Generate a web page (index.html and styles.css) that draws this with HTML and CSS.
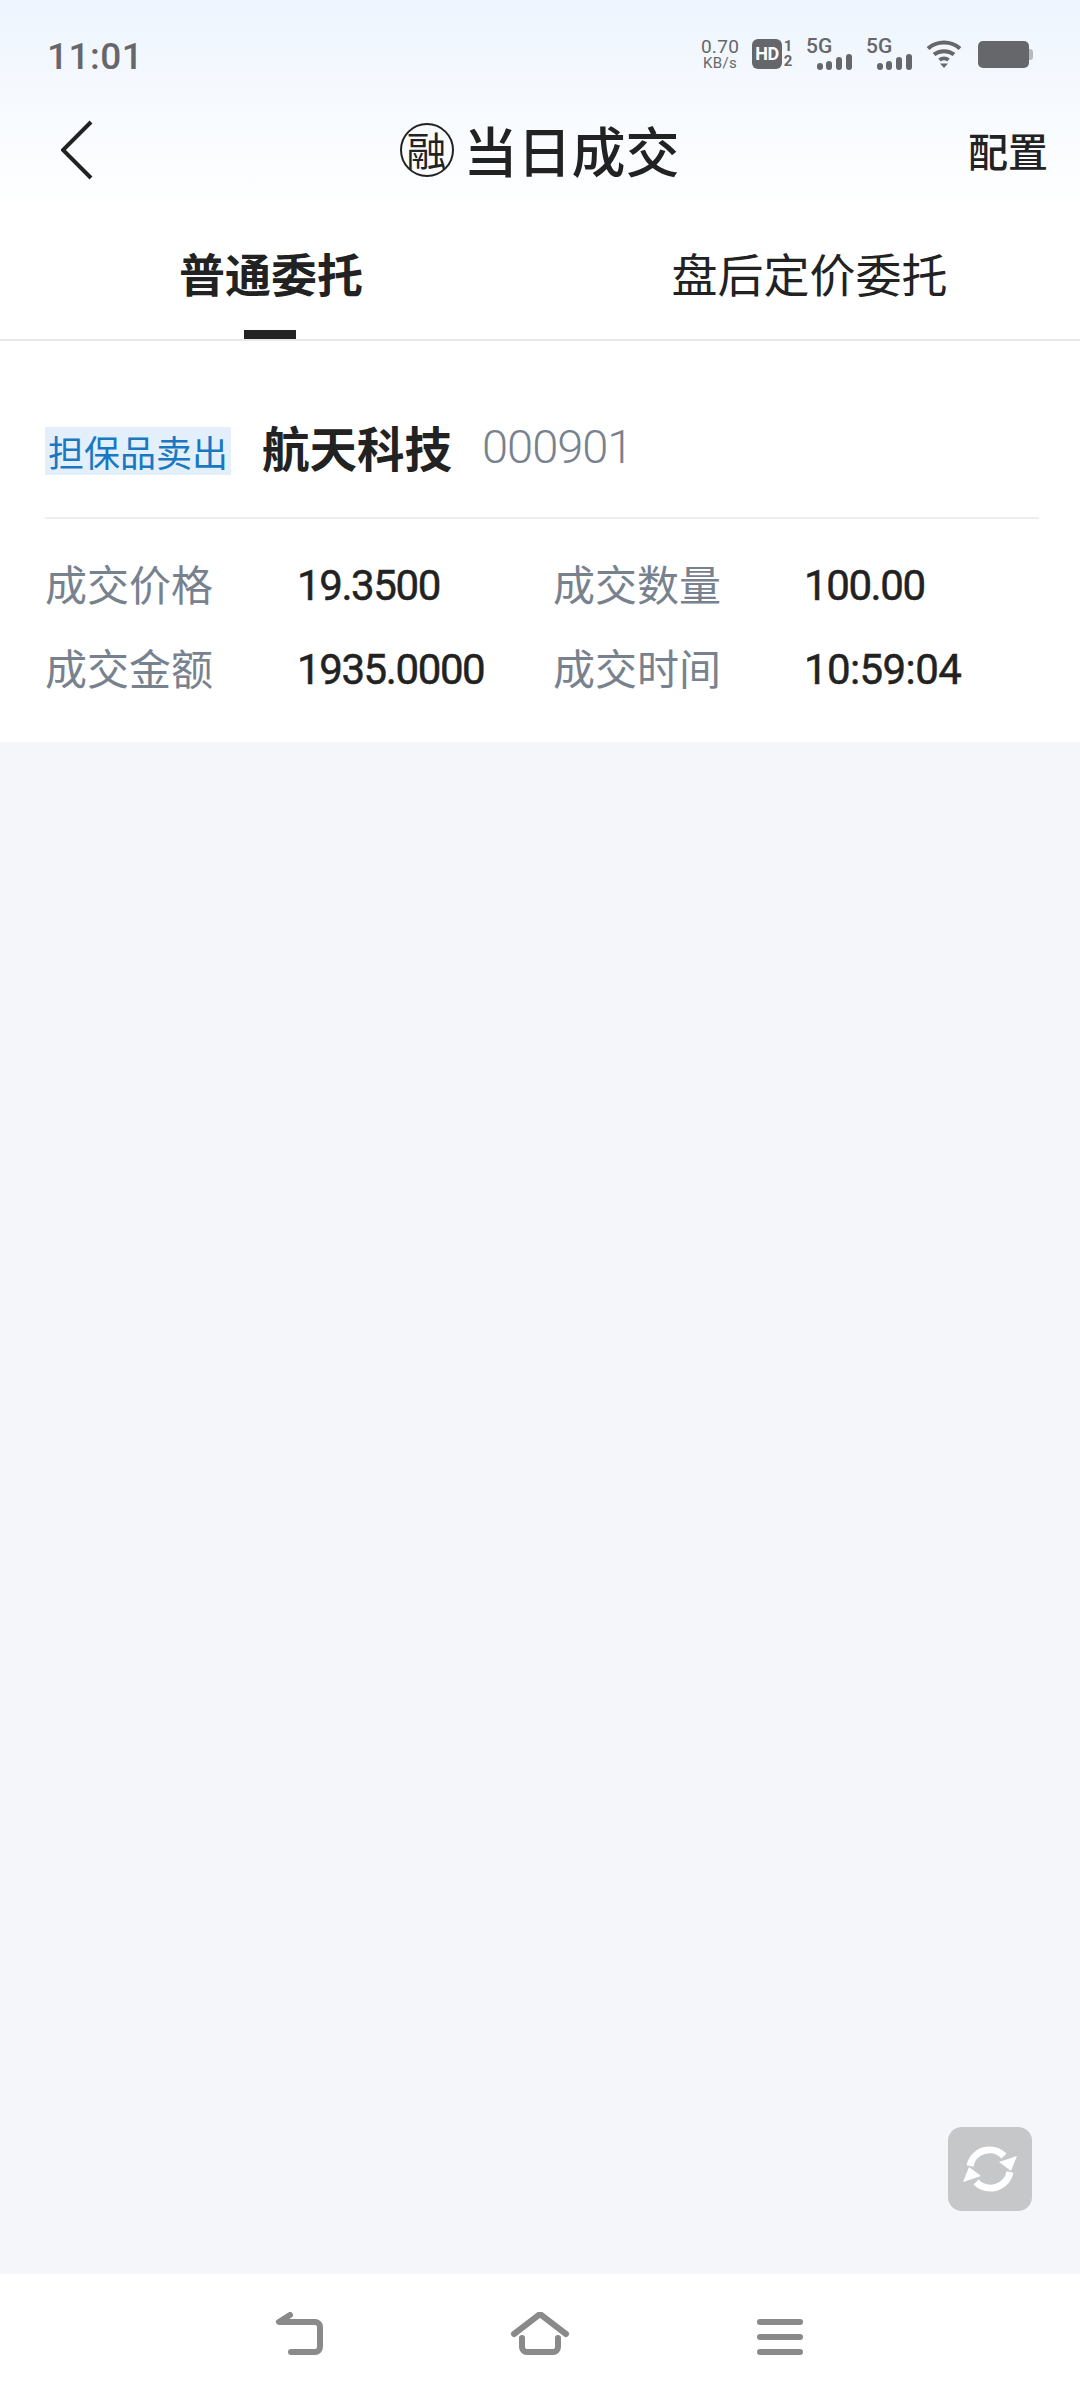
FILE: index.html
```html
<!DOCTYPE html>
<html lang="zh-CN">
<head>
  <meta charset="UTF-8">
  <title>当日成交</title>
  <link rel="stylesheet" href="styles.css">
</head>
<body>

<div class="screen">
  <!-- 顶部渐变区 -->
  <div class="top-area">
    <div class="status-bar">
      <div class="clock">11:01</div>
      <div class="status-icons">
        <div class="net-speed"><span>0.70</span><span class="unit">KB/s</span></div>
        <div class="hd-group">
          <div class="hd-box">HD</div>
          <div class="hd-num"><span>1</span><span>2</span></div>
        </div>
        <div class="signal">
          <span class="signal-text">5G</span>
          <svg class="signal-bars" width="35" height="16" viewBox="0 0 35 16"><rect x="0" y="9" width="6" height="7" rx="3"/><rect x="9" y="7" width="6" height="9" rx="3"/><rect x="19" y="3" width="6" height="13" rx="3"/><rect x="29" y="0" width="6" height="16" rx="3"/></svg>
        </div>
        <div class="signal">
          <span class="signal-text">5G</span>
          <svg class="signal-bars" width="35" height="16" viewBox="0 0 35 16"><rect x="0" y="9" width="6" height="7" rx="3"/><rect x="9" y="7" width="6" height="9" rx="3"/><rect x="19" y="3" width="6" height="13" rx="3"/><rect x="29" y="0" width="6" height="16" rx="3"/></svg>
        </div>
        <svg class="wifi" width="36" height="28" viewBox="0 0 36 28">
          <path d="M2 8.5C11 0.5 25 0.5 34 8.5" />
          <path d="M8 14.5C13.500 10 22.500 10 28 14.5" />
          <path d="M13.500 20C16 18 20 18 22.500 20" />
          <polygon class="wifi-dot" points="14,23.500 22,23.500 18,28" />
        </svg>
        <div class="battery"><div class="battery-body"></div><div class="battery-tip"></div></div>
      </div>
    </div>

    <!-- 标题栏 -->
    <div class="title-bar">
      <svg class="back-btn" width="32" height="60" viewBox="0 0 32 60"><path d="M30 2L2 30L30 58" /></svg>
      <div class="title">
        <span class="title-logo">融</span>
        <span>当日成交</span>
      </div>
      <div class="config">配置</div>
    </div>

    <!-- 标签页 -->
    <div class="tabs">
      <div class="tab tab-active">普通委托</div>
      <div class="tab">盘后定价委托</div>
    </div>
  </div>

  <div class="content">
    <div class="deal-card">
      <div class="deal-head">
        <span class="deal-tag">担保品卖出</span>
        <span class="deal-name">航天科技</span>
        <span class="deal-code">000901</span>
      </div>
      <div class="deal-grid">
        <div class="deal-label">成交价格</div>
        <div class="deal-value">19.3500</div>
        <div class="deal-label">成交数量</div>
        <div class="deal-value">100.00</div>
        <div class="deal-label">成交金额</div>
        <div class="deal-value">1935.0000</div>
        <div class="deal-label">成交时间</div>
        <div class="deal-value deal-time">10:59:04</div>
      </div>
    </div>

    <!-- 刷新按钮 -->
    <div class="refresh-btn">
      <svg width="60" height="60" viewBox="-30 -30 60 60">
        <g id="half">
          <path class="refresh-arc" d="M-20 -3A20 20 0 0 1 14 -13" />
          <polygon class="refresh-head" points="9,-7 27,-13 21,2" />
        </g>
        <use href="#half" transform="rotate(180)" />
      </svg>
    </div>
  </div>

  <!-- 底部导航 -->
  <div class="nav-bar">
    <svg class="nav-icon" width="50" height="46" viewBox="0 0 50 46"><path d="M15 3L4 10H40a5 5 0 0 1 5 5V35a5 5 0 0 1-5 5H16" /></svg>
    <svg class="nav-icon" width="60" height="46" viewBox="0 0 60 46"><path d="M4 22L30 2L56 22" /><path d="M12 26V35a5 5 0 0 0 5 5H43a5 5 0 0 0 5-5V26" /></svg>
    <svg class="nav-icon" width="50" height="46" viewBox="0 0 50 46"><path d="M6 10H46M6 25H46M6 40H46" /></svg>
  </div>
</div>

</body>
</html>
```

FILE: styles.css
```css
* {
  box-sizing: border-box;
}

body {
  margin: 0;
  font-family: "Noto Sans CJK SC", Roboto, sans-serif;
  color: #222;
}

.screen {
  width: 1080px;
  height: 2400px;
  display: flex;
  flex-direction: column;
  background-color: #f4f6fa;
}

/* 顶部 */
.top-area {
  background: linear-gradient(180deg, #eef5fe 0, #ffffff 210px);
  border-bottom: 2px solid #e8e8e8;
}

.status-bar {
  height: 96px;
  padding: 38px 47px 0 47px;
  display: flex;
  justify-content: space-between;
  align-items: flex-start;
  color: #66676a;
  font-family: Roboto, sans-serif;
}

.clock {
  font-size: 37px;
  font-weight: 500;
  line-height: 38px;
  letter-spacing: 0.5px;
}

.status-icons {
  display: flex;
  align-items: flex-start;
}

.net-speed {
  width: 38px;
  margin-top: 1px;
  margin-right: 13px;
  display: flex;
  flex-direction: column;
  align-items: center;
  font-size: 19px;
  font-weight: 400;
  line-height: 16px;
  letter-spacing: 0.3px;
}

.net-speed .unit {
  font-size: 15px;
}

.hd-group {
  display: flex;
  margin-top: 1px;
  margin-right: 12px;
}

.hd-box {
  width: 30px;
  height: 30px;
  border-radius: 6px;
  background-color: #66676a;
  color: #fff;
  font-size: 18px;
  font-weight: 700;
  line-height: 30px;
  text-align: center;
  letter-spacing: -0.5px;
}

.hd-num {
  width: 12px;
  display: flex;
  flex-direction: column;
  align-items: center;
  font-size: 15px;
  font-weight: 700;
  line-height: 15px;
}

.signal {
  width: 46px;
  margin-top: 1px;
  margin-right: 14px;
  display: flex;
  flex-direction: column;
}

.signal-text {
  font-size: 21px;
  font-weight: 500;
  line-height: 15px;
}

.signal-bars {
  align-self: flex-end;
  fill: #66676a;
}

.wifi {
  margin-top: 2px;
  margin-right: 16px;
  fill: none;
  stroke: #66676a;
  stroke-width: 4;
}

.wifi-dot {
  fill: #66676a;
  stroke: none;
}

.battery {
  display: flex;
  align-items: center;
  margin-top: 3px;
}

.battery-body {
  width: 51px;
  height: 27px;
  border-radius: 5px;
  background-color: #66676a;
}

.battery-tip {
  width: 4px;
  height: 11px;
  border-radius: 0 3px 3px 0;
  background-color: #b9babc;
}

/* 标题栏 */
.title-bar {
  height: 114px;
  padding: 0 32px 6px 61px;
  display: flex;
  align-items: center;
  justify-content: space-between;
}

.back-btn {
  fill: none;
  stroke: #222;
  stroke-width: 4;
}

.title {
  display: flex;
  align-items: center;
  gap: 10px;
  margin-left: 18px;
  font-size: 54px;
  font-weight: 500;
  line-height: 60px;
}

.title-logo {
  width: 54px;
  height: 54px;
  border: 2px solid #222;
  border-radius: 50%;
  font-size: 40px;
  font-weight: 400;
  line-height: 48px;
  text-align: center;
}

.config {
  font-size: 40px;
  font-weight: 500;
  line-height: 50px;
}

/* 标签页 */
.tabs {
  height: 129px;
  display: flex;
}

.tab {
  flex: 1;
  padding-top: 32px;
  padding-right: 3px;
  font-size: 46px;
  line-height: 60px;
  text-align: center;
}

.tab:first-child {
  flex: 0 0 542px;
  padding-right: 0;
}

.tab-active {
  position: relative;
  font-weight: 700;
}

.tab-active::after {
  content: "";
  position: absolute;
  left: 244px;
  bottom: 0;
  width: 52px;
  height: 9px;
  background-color: #222;
}

/* 成交卡片 */
.content {
  position: relative;
  flex: 1;
}

.deal-card {
  height: 401px;
  padding: 0 41px 0 45px;
  background-color: #fff;
}

.deal-head {
  height: 178px;
  padding-top: 84px;
  display: flex;
  align-items: flex-start;
  border-bottom: 2px solid #eeeeee;
}

.deal-tag {
  width: 186px;
  height: 48px;
  margin-top: 2px;
  background-color: #e3f0fb;
  color: #1a78c2;
  font-size: 36px;
  line-height: 48px;
  text-align: center;
}

.deal-name {
  margin-left: 31px;
  font-size: 47.500px;
  font-weight: 700;
  line-height: 52px;
  margin-top: -4px;
}

.deal-code {
  margin-left: 30px;
  color: #78828e;
  font-family: Roboto, sans-serif;
  font-size: 47px;
  font-weight: 300;
  line-height: 52px;
  margin-top: -4px;
  letter-spacing: -1px;
}

.deal-grid {
  padding-top: 37px;
  display: grid;
  grid-template-columns: 253px 255px 252px 1fr;
  grid-auto-rows: 84px;
}

.deal-label {
  color: #78828e;
  font-size: 42px;
  line-height: 54px;
}

.deal-value {
  margin-left: -1px;
  font-family: Roboto, sans-serif;
  font-size: 42px;
  font-weight: 400;
  line-height: 60px;
  letter-spacing: -1.4px;
  -webkit-text-stroke: 0.5px #222;
}

.deal-time {
  letter-spacing: -0.6px;
}

.refresh-btn {
  position: absolute;
  left: 948px;
  bottom: 63px;
  width: 84px;
  height: 84px;
  border-radius: 14px;
  background-color: #c6c7c9;
  display: flex;
  align-items: center;
  justify-content: center;
}

.refresh-arc {
  fill: none;
  stroke: #fff;
  stroke-width: 7;
}

.refresh-head {
  fill: #fff;
}

/* 底部导航 */
.nav-bar {
  height: 126px;
  padding: 38px 276px 0 275px;
  background-color: #fff;
  display: flex;
  justify-content: space-between;
  align-items: flex-start;
}

.nav-icon {
  fill: none;
  stroke: #8a8a8a;
  stroke-width: 6;
  stroke-linecap: round;
  stroke-linejoin: round;
}
```
